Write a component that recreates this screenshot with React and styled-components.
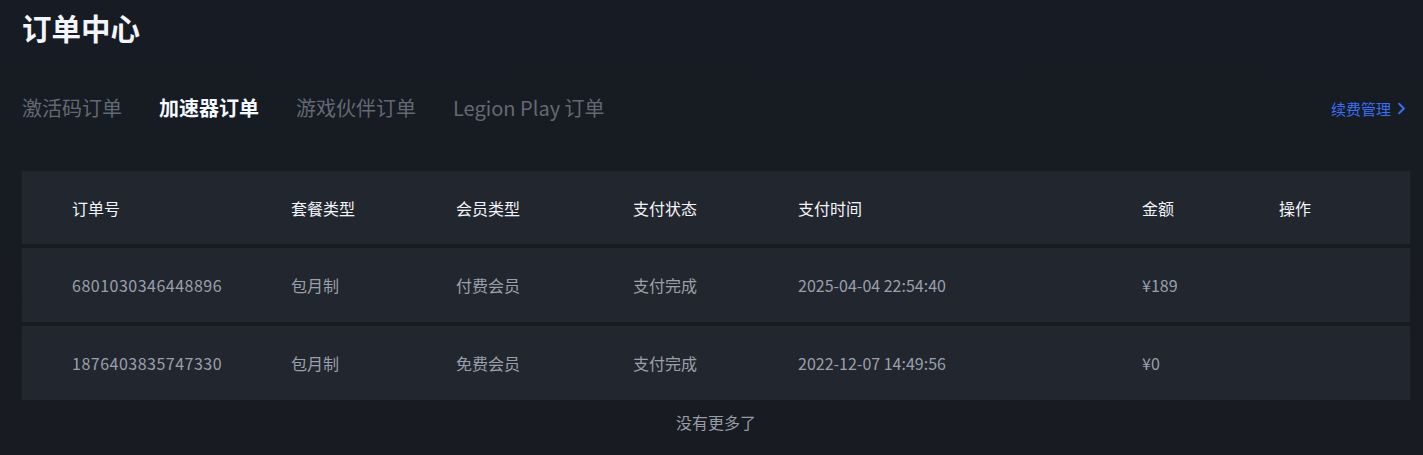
import React from "react";
import styled, { createGlobalStyle } from "styled-components";
import { ChevronRight } from "lucide-react";

const GlobalStyle = createGlobalStyle`
  html, body {
    margin: 0;
    padding: 0;
    background: #181b23;
  }
  body {
    font-family: "Noto Sans CJK SC", "Noto Sans", sans-serif;
  }
`;

const Page = styled.div`
  width: 1423px;
  height: 455px;
  box-sizing: border-box;
  padding: 8px 13px 0 22px;
  background: linear-gradient(180deg, #171b23 0%, #181b21 100%);
  overflow: hidden;
`;

const Title = styled.h1`
  margin: 0;
  font-size: 29.5px;
  line-height: 38px;
  font-weight: 700;
  color: #f2f6fc;
`;

const TabBar = styled.div`
  display: flex;
  align-items: center;
  margin-top: 48px;
  height: 28px;
`;

const Tabs = styled.div`
  display: flex;
  gap: 37px;
  flex: 1;
`;

const Tab = styled.span`
  font-size: 20px;
  line-height: 28px;
  font-weight: ${(p) => (p.$active ? 700 : 400)};
  color: ${(p) => (p.$active ? "#f4f8ff" : "#636974")};
  cursor: pointer;
`;

const RenewLink = styled.a`
  display: flex;
  align-items: center;
  gap: 1px;
  margin-right: -1px;
  font-size: 15px;
  color: #3b6ef2;
  cursor: pointer;
`;

const Table = styled.div`
  margin-top: 49px;
  display: flex;
  flex-direction: column;
  gap: 4px;
`;

const Row = styled.div`
  display: grid;
  grid-template-columns: 219px 165px 177px 165px 344px 137px 1fr;
  align-items: center;
  height: ${(p) => (p.$head ? 73 : 74)}px;
  padding-left: 50px;
  background: #22262f;
  font-size: 16px;
  color: ${(p) => (p.$head ? "#f2f5fa" : "#9aa0aa")};
`;

const Cell = styled.span`
  white-space: nowrap;
  letter-spacing: ${(p) => (p.$num ? "0.5px" : "0")};
`;

const Footer = styled.div`
  margin-top: 11px;
  text-align: center;
  font-size: 16px;
  line-height: 22px;
  color: #979da6;
`;

const headers = ["订单号", "套餐类型", "会员类型", "支付状态", "支付时间", "金额", "操作"];

const orders = [
  ["6801030346448896", "包月制", "付费会员", "支付完成", "2025-04-04 22:54:40", "¥189", ""],
  ["1876403835747330", "包月制", "免费会员", "支付完成", "2022-12-07 14:49:56", "¥0", ""],
];

const App = () => {
  return (
    <Page>
      <GlobalStyle />
      <Title>订单中心</Title>
      <TabBar>
        <Tabs>
          <Tab>激活码订单</Tab>
          <Tab $active>加速器订单</Tab>
          <Tab>游戏伙伴订单</Tab>
          <Tab>Legion Play 订单</Tab>
        </Tabs>
        <RenewLink>
          续费管理
          <ChevronRight size={19} strokeWidth={2.4} />
        </RenewLink>
      </TabBar>
      <Table>
        <Row $head>
          {headers.map((h) => (
            <Cell key={h}>{h}</Cell>
          ))}
        </Row>
        {orders.map((o) => (
          <Row key={o[0]}>
            {o.map((v, i) => (
              <Cell key={i} $num={i === 0}>
                {v}
              </Cell>
            ))}
          </Row>
        ))}
      </Table>
      <Footer>没有更多了</Footer>
    </Page>
  );
};

export default App;
